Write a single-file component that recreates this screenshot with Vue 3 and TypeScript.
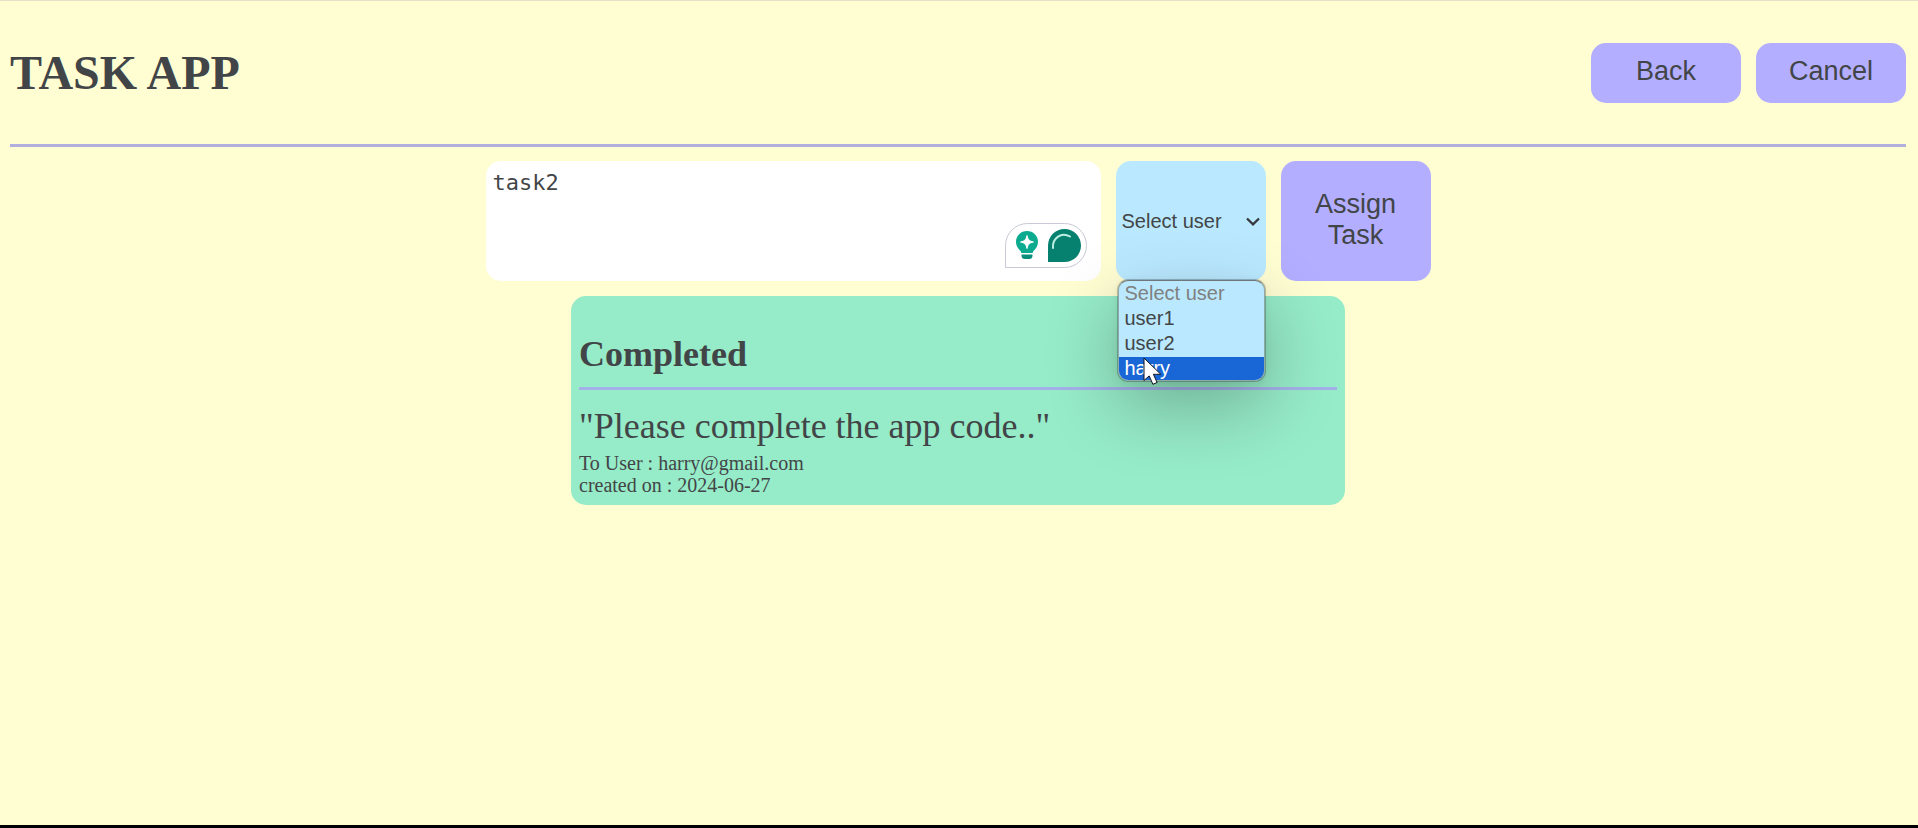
<script setup lang="ts">
import { ref } from 'vue'

interface Task {
  text: string
  email: string
  created: string
}

const placeholder = 'Select user'
const users = ['user1', 'user2', 'harry']
const active = ref('harry')
const selected = ref('')
const open = ref(true)
const draft = ref('task2')
const completed = ref<Task[]>([
  { text: 'Please complete the app code..', email: 'harry@gmail.com', created: '2024-06-27' },
])

function pick(user: string) {
  selected.value = user
  open.value = false
}
</script>

<template>
  <div class="page">
    <header class="header">
      <h1>TASK APP</h1>
      <nav class="actions">
        <button type="button" class="btn">Back</button>
        <button type="button" class="btn">Cancel</button>
      </nav>
    </header>

    <main>
      <form class="composer" @submit.prevent>
        <div class="editor">
          <textarea v-model="draft" aria-label="Task" spellcheck="false"></textarea>
          <div class="assistant">
            <svg class="bulb" viewBox="0 0 24 30" aria-hidden="true">
              <path d="M12 1C5.800 1 1 5.800 1 11.800c0 4.200 2 6.700 4.300 9 .6.600.9 1.200 1 2.200h11.400c.1-1 .4-1.600 1-2.200 2.300-2.300 4.300-4.800 4.300-9C23 5.800 18.200 1 12 1z" fill="#0cab90" />
              <path d="M12 5.500c.9 4.200 2.300 5.600 6.500 6.500-4.200.9-5.600 2.300-6.500 6.500-.9-4.200-2.300-5.600-6.500-6.500 4.200-.9 5.600-2.300 6.500-6.500z" fill="#fff" stroke="#fff" stroke-linejoin="round" />
              <path d="M6.500 24.500h11v1a3.500 3.500 0 0 1-3.500 3.500h-4a3.500 3.500 0 0 1-3.500-3.500z" fill="#0a8f7c" />
            </svg>
            <svg class="drop" viewBox="0 0 33 33" aria-hidden="true">
              <path d="M0 33V16.500A16.500 16.500 0 1 1 16.500 33z" fill="#06806f" />
              <path d="M5 19C4 9.500 13 2.500 22 7.500" fill="none" stroke="#bdeee2" stroke-width="2" stroke-linecap="round" />
            </svg>
          </div>
        </div>

        <div class="picker">
          <select v-model="selected" aria-label="User" @mousedown.prevent="open = !open">
            <option value="" disabled>{{ placeholder }}</option>
            <option v-for="user in users" :key="user" :value="user">{{ user }}</option>
          </select>
          <svg class="chevron" viewBox="0 0 14 9" aria-hidden="true">
            <path d="M1 1.500 7 7.300l6-5.800" fill="none" stroke="#35393d" stroke-width="2.300" />
          </svg>
          <div v-if="open" class="popup">
            <ul class="menu" role="listbox" aria-label="User">
              <li class="option disabled" role="option" aria-disabled="true">{{ placeholder }}</li>
              <li
                v-for="user in users"
                :key="user"
                class="option"
                :class="{ active: user === active }"
                role="option"
                :aria-selected="user === active"
                @mouseenter="active = user"
                @click="pick(user)"
              >
                {{ user }}
              </li>
            </ul>
            <svg class="pointer" viewBox="0 0 20 29" aria-hidden="true">
              <path d="M1 1v22.500l5.200-4.600 3.700 8.400 4.200-1.800-3.700-8.200h7.400z" fill="#fff" stroke="#10131c" stroke-width="1" stroke-linejoin="round" />
            </svg>
          </div>
        </div>

        <button type="submit" class="btn assign">Assign Task</button>
      </form>

      <section class="card">
        <h2>Completed</h2>
        <article v-for="task in completed" :key="task.text" class="task">
          <p class="text">"{{ task.text }}"</p>
          <p class="meta">To User : {{ task.email }}</p>
          <p class="meta">created on : {{ task.created }}</p>
        </article>
      </section>
    </main>
  </div>
</template>

<style>
body {
  margin: 0;
}
</style>

<style scoped>
.page {
  box-sizing: border-box;
  min-height: 100vh;
  padding: 0 12px 0 10px;
  border-top: 1px solid #e8dfca;
  border-bottom: 3px solid #000;
  background: #fffdd2;
  color: #424547;
  font-family: "Liberation Serif", "Times New Roman", serif;
}

.header {
  display: flex;
  align-items: center;
  justify-content: space-between;
  padding: 12px 0;
  border-bottom: 3px solid #b2afdf;
}

h1 {
  margin: 32px 0;
  font-size: 48px;
  line-height: 55px;
}

.actions {
  display: flex;
  gap: 15px;
}

.btn {
  width: 150px;
  height: 60px;
  padding: 0 20px 2px;
  border: 0;
  border-radius: 15px;
  background: #b3aeff;
  color: #424547;
  font: 27px/31px "Liberation Sans", Arial, sans-serif;
}

.composer {
  display: flex;
  justify-content: center;
  gap: 15px;
  margin-top: 14px;
}

.editor {
  position: relative;
  display: flex;
  flex: 0 1 615px;
  height: 120px;
}

textarea {
  box-sizing: border-box;
  width: 100%;
  padding: 8px 7px;
  border: 0;
  border-radius: 15px;
  outline: 0;
  resize: none;
  background: #fff;
  color: #424547;
  font: 22px/28px "DejaVu Sans Mono", monospace;
}

.assistant {
  position: absolute;
  right: 14px;
  bottom: 13px;
  display: flex;
  align-items: center;
  gap: 9px;
  box-sizing: border-box;
  width: 82px;
  height: 45px;
  padding: 0 0 1px 9px;
  border: 1px solid #c9c8d6;
  border-radius: 23px 23px 23px 0;
  background: #fff;
}

.bulb {
  width: 24px;
  height: 30px;
}

.drop {
  width: 33px;
  height: 33px;
}

.picker {
  position: relative;
  flex: 0 0 150px;
}

select {
  width: 100%;
  height: 120px;
  padding: 0 6px;
  border: 0;
  border-radius: 15px;
  outline: 0;
  appearance: none;
  background: #bae9ff;
  color: #424547;
  font: 20px "Liberation Sans", Arial, sans-serif;
}

.chevron {
  position: absolute;
  top: 56px;
  right: 6px;
  width: 14px;
  height: 9px;
  pointer-events: none;
}

.popup {
  position: absolute;
  top: 119px;
  left: 2px;
  right: 1px;
  z-index: 1;
}

.menu {
  margin: 0;
  padding: 1px 0 0;
  overflow: hidden;
  border: 1px solid #8fa9a6;
  border-top-color: #70787c;
  border-radius: 10px;
  background: #bae9ff;
  box-shadow: 0 0 0 1px rgba(0, 0, 0, 0.22), 0 25px 70px rgba(0, 0, 0, 0.26), 0 2px 8px rgba(0, 0, 0, 0.08);
  list-style: none;
  font: 20px/23px "Liberation Sans", Arial, sans-serif;
}

.option {
  height: 23px;
  margin-bottom: 2px;
  padding: 0 6px;
}

.option:last-child {
  margin-bottom: 0;
}

.option.disabled {
  color: #808080;
}

.option.active {
  background: #1967d6;
  color: #fff;
}

.pointer {
  position: absolute;
  top: 77px;
  left: 25px;
  width: 20px;
  height: 29px;
}

.assign {
  height: 120px;
}

.card {
  display: flow-root;
  box-sizing: border-box;
  width: 774px;
  max-width: 100%;
  margin: 15px auto 0;
  padding: 8px 8px 9px;
  border-radius: 15px;
  background: #96ebc8;
}

h2 {
  margin: 30px 0 15px;
  padding-bottom: 12px;
  border-bottom: 3px solid #a3b1e8;
  font-size: 36px;
  line-height: 41px;
}

p {
  margin: 0;
}

.text {
  margin-bottom: 5px;
  font-size: 36px;
  line-height: 42px;
}

.meta {
  font-size: 20px;
  line-height: 22px;
}
</style>
